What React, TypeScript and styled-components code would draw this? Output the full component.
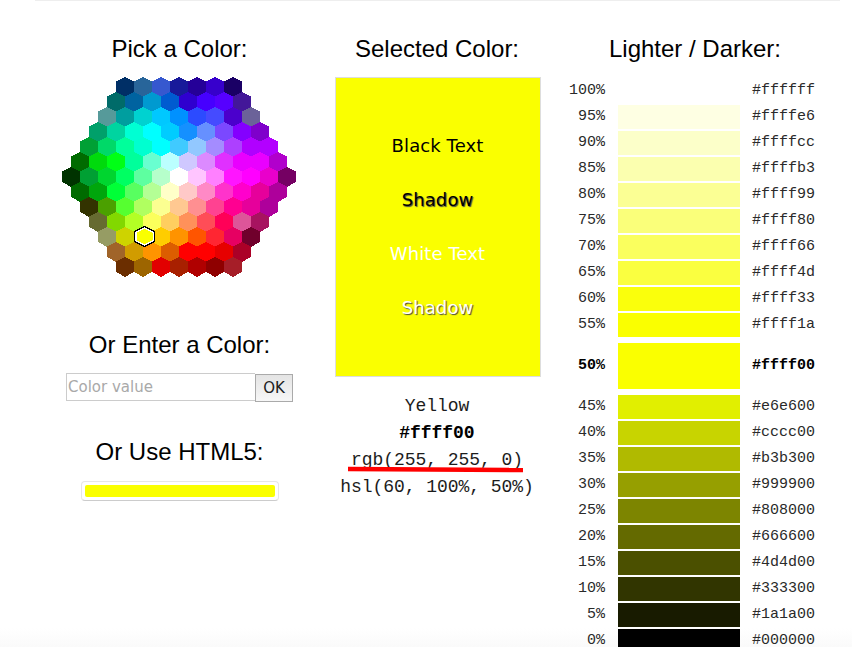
import React from 'react';
import styled, { createGlobalStyle } from 'styled-components';

const GlobalStyle = createGlobalStyle`
  * { box-sizing: border-box; }
  html, body { margin: 0; padding: 0; overflow: hidden; }
  body { background: #fff; color: #000; font-family: Verdana, 'DejaVu Sans', sans-serif; }
`;

const YELLOW = '#faff00';

const Page = styled.main`
  width: 852px;
  height: 647px;
  overflow: hidden;
  padding: 0 12px 0 35px;
  background: linear-gradient(#fff 0, #fff 628px, #fafafa 647px);
`;

const Columns = styled.div`
  border-top: 1px solid #eee;
  display: grid;
  grid-template-columns: 289px 228px 1fr;
  align-items: start;
`;

const Column = styled.section`
  display: flex;
  flex-direction: column;
  align-items: center;
  padding-top: 30px;
`;

const Heading = styled.h3<{ $top?: number; $right?: number }>`
  margin: ${(p) => p.$top ?? 0}px ${(p) => p.$right ?? 0}px 0 0;
  height: 36px;
  font: 400 24px/36px 'Liberation Sans', Arial, sans-serif;
  white-space: nowrap;
`;

const HexMap = styled.svg`
  display: block;
  width: 236px;
  height: 202px;
  margin-top: 10px;
  margin-left: 1px;
`;

const EntryForm = styled.div`
  display: flex;
  width: 227px;
  height: 29px;
  margin-top: 10px;
`;

const ColorInput = styled.input`
  width: 189px;
  height: 28px;
  border: 1px solid #ccc;
  border-right: 0;
  border-radius: 0;
  padding: 0 1px;
  background: #fff;
  font: 15px 'DejaVu Sans', sans-serif;
  outline: 0;
  &::placeholder { color: #a9a9a9; opacity: 1; }
`;

const OkButton = styled.button`
  width: 38px;
  height: 28px;
  margin-top: 1px;
  padding: 0;
  border: 1px solid #aaa;
  border-radius: 0;
  background: linear-gradient(#e4e4e4, #f7f7f7);
  color: #222;
  font: 15px 'DejaVu Sans', sans-serif;
`;

const NativePicker = styled.div`
  width: 198px;
  height: 20px;
  margin-top: 11px;
  padding: 3px;
  border: 1px solid #e6e6e6;
  border-bottom-color: #ccc;
  border-radius: 4px;
  background: #fff;
`;

const NativeSwatch = styled.div`
  height: 12px;
  border-radius: 2px;
  background: ${YELLOW};
`;

const Preview = styled.div`
  width: 206px;
  height: 300px;
  margin-top: 10px;
  padding-top: 54px;
  border: 1px solid #ddd;
  background: ${YELLOW};
  text-align: center;
`;

const Sample = styled.p<{ $color: string; $shadow?: string }>`
  margin: 0 0 27px;
  font: 18px/27px 'DejaVu Sans', sans-serif;
  letter-spacing: 0.1px;
  padding-right: 1px;
  color: ${(p) => p.$color};
  text-shadow: ${(p) => (p.$shadow ? `1px 1px 1px ${p.$shadow}` : 'none')};
`;

const Values = styled.div`
  margin: 16px 2px 0 0;
  text-align: center;
  color: #1c1c1c;
  font: 18px/27px 'Liberation Mono', 'Courier New', monospace;
  letter-spacing: -0.05px;
  white-space: nowrap;
`;

const Value = styled.div<{ $bold?: boolean }>`
  color: ${(p) => (p.$bold ? '#000' : 'inherit')};
  font-weight: ${(p) => (p.$bold ? 700 : 400)};
`;

const Marked = styled.div`
  position: relative;
`;

const MarkerLine = styled.svg`
  position: absolute;
  left: 8px;
  top: 18px;
  width: 178px;
  height: 8px;
`;

const Shades = styled.div`
  display: grid;
  gap: 2px;
  width: 252px;
  margin-top: 12px;
`;

const ShadeRow = styled.div<{ $main: boolean }>`
  display: grid;
  grid-template-columns: 48px 122px 76px;
  height: ${(p) => (p.$main ? 46 : 24)}px;
  margin: ${(p) => (p.$main ? 4 : 0)}px 0;
  color: ${(p) => (p.$main ? '#000' : '#2a2a2a')};
  line-height: ${(p) => (p.$main ? 45 : 23)}px;
  font-family: 'Liberation Mono', 'Courier New', monospace;
  font-size: 15px;
  font-weight: ${(p) => (p.$main ? 700 : 400)};
`;

const Percent = styled.span`
  padding-right: 13px;
  display: flex;
  justify-content: flex-end;
`;

const Shade = styled.span<{ $color: string }>`
  background: ${(p) => p.$color};
`;

const Hex = styled.span`
  padding-left: 12px;
`;

const hexRows: string[] = [
  '002f66 28659a 3658cf 181a9a 250098 3700cc 1a0065',
  '006b69 0063a0 009ad0 005bd0 2f00cf 4600ff 5600ff 431799',
  '569a9a 009e9f 00d2d0 00c8ff 0091ff 2c4bff 454bff 4b00cc 6b6299',
  '00a06a 00d4a0 00ffd3 00ffff 00ccff 1590ff 6690ff 7b48ff 8400ff 7f00cb',
  '00a035 00d968 00ff9b 00ffd0 00ffff 40caff 92c8ff a48cff ad40ff b000ff b300ff',
  '006b00 00da0c 00ff16 00ff9b 69ffd0 bbffff cfc8ff dc8aff e030ff e900ff e900ff b100cc',
  '003300 00a033 00d52f 00ff62 5effa0 b6ffcb ffffff ffc5ff ff80ff ff15ff ff00ff e900cb 750063',
  '006b00 00a60c 00ff37 58ff60 b4ff95 ffffc8 ffc9c8 ff89c6 ff33cb ff00cc e6009b ae009b',
  '333300 4ba000 56ff30 b0ff60 fbff91 ffc891 ff8f91 ff4291 ff0091 e6009b ae009b',
  '666a30 82d800 b3ff25 fbff5c ffce5f ff915a ff4d57 ff0057 dd5599 a71360',
  '969c64 ced300 f9ff00 ffcd00 ff9300 ff5500 ff2632 e60062 70002c',
  'a06429 d19c00 ff9400 dc5d00 ff0000 ff0000 e60000 ab0027',
  '6b2e00 9d6500 e20000 a82000 b00000 8f0000 a61e28',
];

const shades: [number, string, string][] = [
  [100, '#ffffff', '#ffffff'],
  [95, '#ffffe6', '#feffe3'],
  [90, '#ffffcc', '#fcffc9'],
  [85, '#ffffb3', '#fbffaf'],
  [80, '#ffff99', '#fbff94'],
  [75, '#ffff80', '#faff7a'],
  [70, '#ffff66', '#faff5e'],
  [65, '#ffff4d', '#faff40'],
  [60, '#ffff33', '#faff0c'],
  [55, '#ffff1a', YELLOW],
  [50, '#ffff00', YELLOW],
  [45, '#e6e600', '#e1ef00'],
  [40, '#cccc00', '#c8d400'],
  [35, '#b3b300', '#b0ba00'],
  [30, '#999900', '#969f00'],
  [25, '#808000', '#7d8500'],
  [20, '#666600', '#646a00'],
  [15, '#4d4d00', '#4b5000'],
  [10, '#333300', '#313500'],
  [5, '#1a1a00', '#181b00'],
  [0, '#000000', '#000000'],
];

function ColorMap() {
  return (
    <HexMap viewBox="0 0 236 202" shapeRendering="crispEdges">
      {hexRows.map((row, r) => {
        const cells = row.split(' ');
        const left = (13 - cells.length) * 9;
        return cells.map((c, i) => (
          <polygon
            key={`${r}-${i}`}
            fill={`#${c}`}
            points="9,0 18,4.6 18,15.2 9,19.8 0,15.2 0,4.6"
            transform={`translate(${left + i * 18} ${r * 15})`}
          />
        ));
      })}
      <g transform="translate(72 149)">
        <polygon points="10.5,0 21,5.2 21,15.8 10.5,21 0,15.8 0,5.2" fill="#000" />
        <polygon points="10.5,1.2 20,6 20,15 10.5,19.8 1,15 1,6" fill="#fff" />
        <polygon points="10.5,2.6 18.5,6.6 18.5,14.4 10.5,18.4 2.5,14.4 2.5,6.6" fill={YELLOW} />
      </g>
    </HexMap>
  );
}

export default function App() {
  return (
    <>
      <GlobalStyle />
      <Page>
        <Columns>
          <Column>
            <Heading>Pick a Color:</Heading>
            <ColorMap />
            <Heading $top={48}>Or Enter a Color:</Heading>
            <EntryForm>
              <ColorInput placeholder="Color value" />
              <OkButton>OK</OkButton>
            </EntryForm>
            <Heading $top={32}>Or Use HTML5:</Heading>
            <NativePicker>
              <NativeSwatch />
            </NativePicker>
          </Column>
          <Column>
            <Heading $right={2}>Selected Color:</Heading>
            <Preview>
              <Sample $color="#000">Black Text</Sample>
              <Sample $color="#000" $shadow="#444">Shadow</Sample>
              <Sample $color="#fff">White Text</Sample>
              <Sample $color="#fff" $shadow="#444">Shadow</Sample>
            </Preview>
            <Values>
              <Value>Yellow</Value>
              <Value $bold>#ffff00</Value>
              <Marked>
                <Value>rgb(255, 255, 0)</Value>
                <MarkerLine viewBox="0 0 178 8">
                  <path d="M0 4 L175 5" stroke="#f00" strokeWidth="4.5" fill="none" />
                </MarkerLine>
              </Marked>
              <Value>hsl(60, 100%, 50%)</Value>
            </Values>
          </Column>
          <Column>
            <Heading $right={2}>Lighter / Darker:</Heading>
            <Shades>
              {shades.map(([pct, label, paint]) => (
                <ShadeRow key={pct} $main={pct === 50}>
                  <Percent>{pct}%</Percent>
                  <Shade $color={paint} />
                  <Hex>{label}</Hex>
                </ShadeRow>
              ))}
            </Shades>
          </Column>
        </Columns>
      </Page>
    </>
  );
}
